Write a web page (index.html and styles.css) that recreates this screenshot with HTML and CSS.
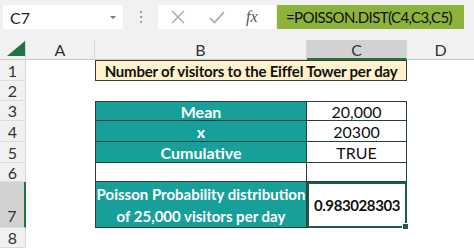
FILE: index.html
```html
<!DOCTYPE html>
<html lang="en">
<head>
    <meta charset="UTF-8">
    <title>POISSON.DIST</title>
    <link rel="stylesheet" href="styles.css">
</head>
<body>
    <!-- 编辑栏 -->
    <div class="bar">
        <div class="namebox">
            <span>C7</span>
            <svg width="8" height="5" viewBox="0 0 8 5"><path d="M1 1 L4 4 L7 1 Z" fill="#777"/></svg>
        </div>
        <div class="dots"><i></i><i></i><i></i></div>
        <div class="btns">
            <svg class="x" width="14" height="14" viewBox="0 0 14 14"><path d="M1 1 L13 13 M13 1 L1 13" stroke="#a6a6a6" stroke-width="1.4"/></svg>
            <svg class="ok" width="16" height="13" viewBox="0 0 16 13"><path d="M1 7 L5.5 11.5 L15 1" fill="none" stroke="#a6a6a6" stroke-width="1.6"/></svg>
            <span class="fx">fx</span>
        </div>
        <div class="formula">=POISSON.DIST(C4,C3,C5)</div>
    </div>

    <!-- 表格区域 -->
    <div class="sheet">
        <div class="corner"><svg width="18" height="15" viewBox="0 0 18 15"><path d="M18 0 L18 15 L0 15 Z" fill="#217346"/></svg></div>
        <div class="colhead">A</div>
        <div class="colhead">B</div>
        <div class="colhead sel">C</div>
        <div class="colhead last">D</div>

        <div class="rowhead">1</div>
        <div class="cell"></div>
        <div class="cell title">Number of visitors to the Eiffel Tower per day</div>
        <div class="cell"></div>

        <div class="rowhead">2</div>
        <div class="cell"></div><div class="cell"></div><div class="cell"></div><div class="cell"></div>

        <div class="rowhead">3</div>
        <div class="cell"></div>
        <div class="cell lab top">Mean</div>
        <div class="cell val top">20,000</div>
        <div class="cell"></div>

        <div class="rowhead">4</div>
        <div class="cell"></div>
        <div class="cell lab">x</div>
        <div class="cell val">20300</div>
        <div class="cell"></div>

        <div class="rowhead">5</div>
        <div class="cell"></div>
        <div class="cell lab">Cumulative</div>
        <div class="cell val">TRUE</div>
        <div class="cell"></div>

        <div class="rowhead">6</div>
        <div class="cell"></div>
        <div class="cell blank"></div>
        <div class="cell val"></div>
        <div class="cell"></div>

        <div class="rowhead tall">7</div>
        <div class="cell"></div>
        <div class="cell lab two">Poisson Probability distribution<br>of 25,000 visitors per day</div>
        <div class="cell val active">0.983028303<span class="handle"></span></div>
        <div class="cell"></div>

        <div class="rowhead">8</div>
        <div class="cell"></div><div class="cell"></div><div class="cell"></div><div class="cell"></div>
    </div>
</body>
</html>
```

FILE: styles.css
```css
body {
    margin: 0;
    padding: 0;
    background-color: #fff;
    font-family: Lato, "Open Sans", sans-serif;
    width: 474px;
    height: 248px;
    overflow: hidden;
}
.bar {
    display: flex;
    align-items: center;
    height: 40px;
    padding: 0 3px 6px 3px;
    box-sizing: border-box;
    background-color: #f1f1f1;
}
.namebox {
    width: 120px;
    height: 24px;
    background-color: #fff;
    display: flex;
    align-items: center;
    justify-content: space-between;
    padding: 0 6px 0 7px;
    box-sizing: border-box;
    font-size: 16px;
    color: #222;
}
.dots {
    width: 35px;
    display: flex;
    flex-direction: column;
    align-items: center;
    gap: 3px;
}
.dots i {
    width: 2px;
    height: 2px;
    background-color: #a0a0a0;
}
.btns {
    width: 118px;
    height: 24px;
    background-color: #fff;
    display: flex;
    align-items: center;
    padding-left: 13px;
    box-sizing: border-box;
}
.btns .ok {
    margin-left: 24px;
}
.fx {
    margin-left: 21px;
    font-family: "Liberation Serif", serif;
    font-style: italic;
    font-size: 16px;
    color: #555;
}
.formula {
    margin-left: 1px;
    width: 187px;
    height: 24px;
    background-color: #8db33a;
    font-size: 15px;
    letter-spacing: -0.6px;
    line-height: 24px;
    padding-left: 9px;
    box-sizing: border-box;
    color: #111;
    white-space: nowrap;
}

/* 表格 */
.sheet {
    display: grid;
    grid-template-columns: 26px 69px 212px 100px 1fr;
    grid-template-rows: 20px 21px 20px 20px 21px 21px 19px 46px 20px;
    background-color: #fff;
}
.corner {
    background-color: #f1f1f1;
    border-right: 1px solid #d6d6d6;
    border-bottom: 1px solid #c8c8c8;
    display: flex;
    align-items: flex-end;
    justify-content: flex-end;
    padding: 0 0 3px 0;
    box-sizing: border-box;
}
.colhead {
    background-color: #f1f1f1;
    border-right: 1px solid #d6d6d6;
    border-bottom: 1px solid #c8c8c8;
    font-size: 16px;
    color: #333;
    text-align: center;
    line-height: 20px;
    box-sizing: border-box;
}
.colhead.sel {
    background-color: #d2d2d2;
    border-bottom: 2px solid #217346;
}
.colhead.last {
    border-right: none;
}
.rowhead {
    background-color: #f1f1f1;
    border-right: 1px solid #d6d6d6;
    border-bottom: 1px solid #dcdcdc;
    font-size: 16px;
    color: #333;
    display: flex;
    align-items: center;
    justify-content: center;
    box-sizing: border-box;
}
.rowhead.tall {
    background-color: #d2d2d2;
    border-right: 2px solid #217346;
    align-items: flex-end;
    padding-bottom: 2px;
}
.cell {
    box-sizing: border-box;
    font-size: 16px;
    display: flex;
    align-items: center;
    justify-content: center;
    white-space: nowrap;
}
.title {
    grid-column: span 2;
    background-color: #fff2cc;
    border: 1px solid #3c3c3c;
    font-weight: bold;
    font-size: 15px;
    letter-spacing: -0.2px;
    color: #111;
}
.lab {
    background-color: #17a09a;
    color: #fff;
    font-weight: bold;
    border: 1px solid #26403f;
    border-top: none;
}
.val {
    color: #111;
    border: 1px solid #26403f;
    border-left: none;
    border-top: none;
}
.top {
    border-top: 1px solid #26403f;
}
.blank {
    border: 1px solid #26403f;
    border-top: none;
}
.two {
    white-space: normal;
    text-align: center;
    font-size: 15px;
    line-height: 22px;
}
.active {
    position: relative;
    font-weight: bold;
    font-size: 15px;
    letter-spacing: -0.4px;
    border: 2px solid #1f5a48;
}
.handle {
    position: absolute;
    right: -4px;
    bottom: -4px;
    width: 5px;
    height: 5px;
    background-color: #1f5a48;
    border: 1px solid #fff;
}
```
